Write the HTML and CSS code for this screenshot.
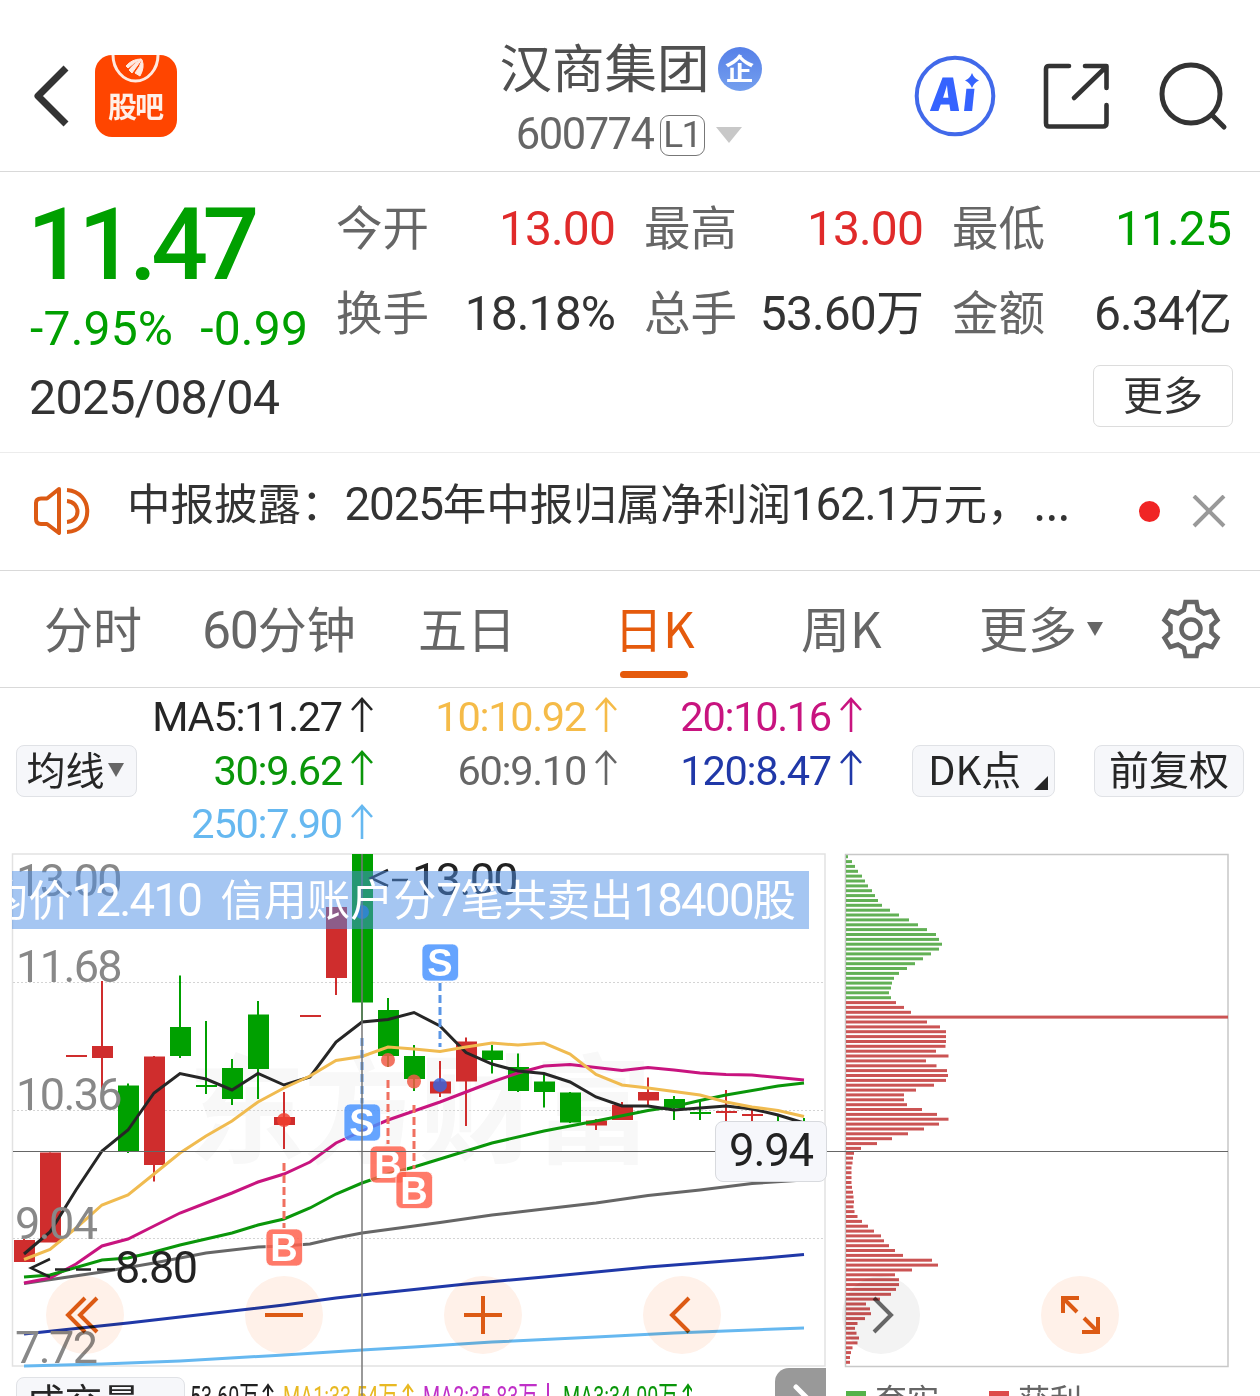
FILE: index.html
```html
<!DOCTYPE html>
<html lang="zh-CN">
<head>
    <meta charset="UTF-8">
    <meta name="viewport" content="width=device-width, initial-scale=1.0">
    <title>汉商集团 600774</title>
    <link rel="stylesheet" href="styles.css">
</head>
<body>
    <div class="header">
        <div class="header-left">
            <svg class="back" width="40" height="64" viewBox="0 0 40 64"><path d="M35 4 L7 32 L35 60" fill="none" stroke="#333" stroke-width="7" stroke-linejoin="round"/></svg>
            <svg class="guba" width="82" height="82" viewBox="0 0 82 82">
                <rect width="82" height="82" rx="17" fill="#ff4500"/>
                <path d="M18 0 A22.5 26 0 0 0 63 0" fill="none" stroke="#ffe9e0" stroke-width="3"/>
                <path d="M31 11 Q37 4 46 4 Q38 8 33 13Z M34 15 Q39 8 47 4 Q42 11 37 18Z M40 18 Q45 12 47 5 Q50 12 45 21Z" fill="#ffe9e0" stroke="#ffe9e0"/>
                <text x="41" y="63" textLength="56" text-anchor="middle" class="guba-text">股吧</text>
            </svg>
        </div>
        <div class="header-title">
            <div class="stock-name">汉商集团<span class="qi">企</span></div>
            <div class="stock-code">600774<span class="level">L1</span><i class="code-arrow"></i></div>
        </div>
        <div class="header-right">
            <svg width="82" height="82" viewBox="0 0 82 82">
                <circle cx="41" cy="41" r="38.3" fill="none" stroke="#4169ea" stroke-width="4"/>
                <g class="ai-text" transform="skewX(-6)">
                    <text x="21" y="56" textLength="31" lengthAdjust="spacingAndGlyphs">A</text>
                    <text x="54" y="56.500" font-size="41">ı</text>
                </g>
                <path d="M58 18 Q60 23.500 65 25.500 Q60 27.500 58 33 Q56 27.500 51 25.500 Q56 23.500 58 18Z" fill="#3563ff"/>
            </svg>
            <svg width="68" height="68" viewBox="0 0 68 68" fill="none" stroke="#333" stroke-width="4.600" stroke-linecap="round" stroke-linejoin="round">
                <path d="M26 4 H6 Q3 4 3 7 V61 Q3 64.500 6 64.500 H60 Q63.500 64.500 63.500 61 V43 M42 4 H63.500 V26 M63 5 L31 36"/>
            </svg>
            <svg width="70" height="70" viewBox="0 0 70 70" fill="none" stroke="#333" stroke-width="5" stroke-linecap="round">
                <circle cx="33" cy="33" r="29"/><path d="M54 54 L66 66"/>
            </svg>
        </div>
    </div>

    <div class="quote">
        <div class="quote-left">
            <div class="price">11.47</div>
            <div class="change"><span>-7.95%</span><span>-0.99</span></div>
            <div class="date">2025/08/04</div>
        </div>
        <div class="quote-right">
            <div class="quote-grid">
                <div class="cell"><label>今开</label><span class="up">13.00</span></div>
                <div class="cell"><label>最高</label><span class="up">13.00</span></div>
                <div class="cell"><label>最低</label><span class="down">11.25</span></div>
                <div class="cell"><label>换手</label><span>18.18%</span></div>
                <div class="cell"><label>总手</label><span>53.60万</span></div>
                <div class="cell"><label>金额</label><span>6.34亿</span></div>
            </div>
            <button class="more-btn">更多</button>
        </div>
    </div>

    <div class="notice">
        <svg width="60" height="52" viewBox="0 0 60 52" fill="none" stroke="#dc5a14" stroke-width="4" stroke-linejoin="round">
            <path d="M27 3 L15 12.500 H9 Q4 12.500 4 17 V33 Q4 38 9 38 H15 L27 47Z"/>
            <path d="M35 4 C62 6 62 45 35 46 M35 15 C49 16 49 35 35 36"/>
        </svg>
        <div class="notice-text">中报披露：<span class="num">2025</span>年中报归属净利润<span class="num">162.1</span>万元，<span class="dots">...</span></div>
        <i class="red-dot"></i>
        <svg width="34" height="34" viewBox="0 0 34 34" stroke="#999" stroke-width="4"><path d="M2 1 L32 31 M32 1 L2 31"/></svg>
    </div>

    <div class="tabs">
        <div class="tab tab-fs">分时</div>
        <div class="tab tab-60"><span class="num">60</span>分钟</div>
        <div class="tab tab-5d">五日</div>
        <div class="tab tab-day active">日K</div>
        <div class="tab tab-week">周K</div>
        <div class="tab tab-more">更多<i class="tri"></i></div>
        <svg class="gear" width="60" height="60" viewBox="0 0 60 60" fill="none" stroke="#666" stroke-width="4.500">
            <path d="M24.500 3 H35.500 L37 11 L43 14.500 L51 12 L56.500 21 L50.500 26.500 V33.500 L56.500 39 L51 48 L43 45.500 L37 49 L35.500 57 H24.500 L23 49 L17 45.500 L9 48 L3.500 39 L9.500 33.500 V26.500 L3.500 21 L9 12 L17 14.500 L23 11Z"/>
            <circle cx="30" cy="30" r="9.500"/>
        </svg>
    </div>

    <div class="ma">
        <button class="chip-btn ma-btn">均线<i class="tri"></i></button>
        <div class="ma-grid">
            <div class="ma-item c5">MA5:11.27<svg class="arrow"><use href="#up"/></svg></div>
            <div class="ma-item c10">10:10.92<svg class="arrow"><use href="#up"/></svg></div>
            <div class="ma-item c20">20:10.16<svg class="arrow"><use href="#up"/></svg></div>
            <div class="ma-item c30">30:9.62<svg class="arrow"><use href="#up"/></svg></div>
            <div class="ma-item c60">60:9.10<svg class="arrow"><use href="#up"/></svg></div>
            <div class="ma-item c120">120:8.47<svg class="arrow"><use href="#up"/></svg></div>
            <div class="ma-item c250">250:7.90<svg class="arrow"><use href="#up"/></svg></div>
        </div>
        <button class="chip-btn dk-btn">DK点<i class="corner"></i></button>
        <button class="chip-btn fq-btn">前复权</button>
    </div>

    <div class="chart">
        <svg id="chart" width="1260" height="512" viewBox="0 854 1260 512"></svg>
        <div class="banner"><span>均价<span class="num">12.410</span>&nbsp; 信用账户分<span class="num">7</span>笔共卖出<span class="num">18400</span>股</span></div>
        <div class="price-tag">9.94</div>
        <div class="controls">
            <button class="round"><svg viewBox="0 0 78 78"><path d="M39 22 L22 39 L39 56 M51 22 L34 39 L51 56"/></svg></button>
            <button class="round"><svg viewBox="0 0 78 78"><path d="M20 39 H58"/></svg></button>
            <button class="round"><svg viewBox="0 0 78 78"><path d="M20 39 H58 M39 20 V58"/></svg></button>
            <button class="round"><svg viewBox="0 0 78 78"><path d="M46 22 L29 39 L46 56"/></svg></button>
            <button class="round gray"><svg viewBox="0 0 78 78"><path d="M32 22 L49 39 L32 56"/></svg></button>
            <button class="round"><svg viewBox="0 0 78 78"><path d="M22 37 V22 H38 M22 22 L36 36 M57 41 V56 H41 M43 42 L57 56"/></svg></button>
        </div>
    </div>

    <div class="volume">
        <button class="chip-btn vol-btn">成交量<i class="tri"></i></button>
        <svg class="vol-text" width="504" height="38" viewBox="188 1374 504 38">
            <text x="190" y="1407" fill="#222" textLength="69" lengthAdjust="spacingAndGlyphs">53.60万</text>
            <text x="283" y="1407" fill="#e8b923" textLength="115" lengthAdjust="spacingAndGlyphs">MA1:33.54万</text>
            <text x="423" y="1407" fill="#c030c8" textLength="115" lengthAdjust="spacingAndGlyphs">MA2:35.83万</text>
            <text x="563" y="1407" fill="#0a960a" textLength="115" lengthAdjust="spacingAndGlyphs">MA3:34.00万</text>
            <g fill="none" stroke-width="2">
                <path stroke="#222" d="M268 1408 V1385 M263 1392 L268 1385 L273 1392"/>
                <path stroke="#e8b923" d="M408 1408 V1385 M403 1392 L408 1385 L413 1392"/>
                <path stroke="#c030c8" d="M548 1408 V1383"/>
                <path stroke="#0a960a" d="M688 1408 V1385 M683 1392 L688 1385 L693 1392"/>
            </g>
        </svg>
        <div class="vol-next"><svg width="51" height="50" viewBox="0 0 51 50"><path d="M21 19 L36 34 L21 49" fill="none" stroke="#fff" stroke-width="5" stroke-linecap="round"/></svg></div>
        <div class="legend"><i class="sq green"></i>套牢<i class="sq red"></i>获利</div>
    </div>

    <svg class="defs">
        <symbol id="up" viewBox="0 0 22 36"><path d="M11 35 V2 M1 13 L11 2 L21 13" fill="none" stroke="currentColor" stroke-width="2.600"/></symbol>
    </svg>
    <script src="script.js"></script>
</body>
</html>
```

FILE: styles.css
```css
:root {
    --text: #333333;
    --muted: #666666;
    --up: #e02a2a;
    --down: #00a000;
    --accent: #e55a0c;
    --line: #d9d9d9;
    --num: Roboto, "Noto Sans CJK SC", sans-serif;
}

* {
    box-sizing: border-box;
}

body {
    margin: 0;
    width: 1260px;
    height: 1396px;
    overflow: hidden;
    background: #ffffff;
    color: var(--text);
    font-family: "Noto Sans CJK SC", sans-serif;
}

svg {
    display: block;
    flex: none;
}

button {
    font-family: inherit;
    color: inherit;
    padding: 0;
}

.defs {
    width: 0;
    height: 0;
}

.num {
    font-family: var(--num);
    font-size: 1.055em;
    letter-spacing: -1.200px;
}

/* header */
.header {
    display: flex;
    justify-content: space-between;
    height: 172px;
    padding: 0 32px 0 31px;
    border-bottom: 1px solid var(--line);
}

.header-left {
    display: flex;
    align-items: center;
    gap: 24px;
    width: 380px;
    padding-top: 20px;
}

.guba-text {
    font-size: 29px;
    font-weight: 700;
    fill: #fff0e8;
}

.header-title {
    width: 290px;
    margin-left: 34px;
    padding-top: 32px;
    white-space: nowrap;
}

.stock-name {
    display: flex;
    align-items: center;
    justify-content: flex-end;
    height: 66px;
    font-size: 52.500px;
    line-height: 66px;
    color: #505050;
    margin-right: 30px;
}

.qi {
    flex: none;
    width: 44px;
    height: 44px;
    margin: 8px 0 0 8px;
    border-radius: 50%;
    background: linear-gradient(#5680e8, #749fee);
    color: #fff;
    font-size: 29px;
    font-weight: 700;
    line-height: 40px;
    text-align: center;
}

.stock-code {
    display: flex;
    align-items: center;
    justify-content: flex-end;
    height: 66px;
    padding-top: 8px;
    font-family: var(--num);
    font-size: 43.500px;
    line-height: 58px;
    letter-spacing: -1.500px;
    color: var(--muted);
    margin-right: 50px;
}

.level {
    width: 45px;
    height: 41px;
    margin: 0 11px 0 6px;
    border: 1.500px solid #777;
    border-radius: 9px;
    font-size: 37px;
    line-height: 38px;
    text-align: center;
}

.code-arrow {
    border: 13px solid transparent;
    border-top: 16px solid #c8c8c8;
    border-bottom: 0;
}

.header-right {
    display: flex;
    align-items: center;
    justify-content: flex-end;
    gap: 47px;
    width: 380px;
    padding-top: 20px;
}

.ai-text {
    font-family: Inter, sans-serif;
    font-weight: 900;
    font-size: 46px;
    fill: #3563ff;
}

/* quote */
.quote {
    display: flex;
    height: 281px;
    padding: 0 28px 0 30px;
    border-bottom: 1px solid #ececec;
}

.quote-left {
    width: 307px;
    padding-top: 23px;
    font-family: var(--num);
}

.price {
    margin-left: -3px;
    font-size: 100px;
    font-weight: 500;
    line-height: 100px;
    letter-spacing: -5.700px;
    color: var(--down);
}

.change {
    display: flex;
    gap: 27px;
    margin-top: -1px;
    font-size: 48px;
    line-height: 70px;
    letter-spacing: 0.200px;
    color: var(--down);
}

.date {
    margin-left: -1px;
    font-size: 48.500px;
    line-height: 68px;
    letter-spacing: -0.800px;
}

.quote-right {
    flex: 1;
    display: flex;
    flex-direction: column;
    align-items: flex-end;
}

.quote-grid {
    display: grid;
    grid-template-columns: repeat(3, 279px);
    column-gap: 29px;
    width: 895px;
    margin-right: 1px;
    padding-top: 11px;
}

.cell {
    display: flex;
    justify-content: space-between;
    height: 84.500px;
    font-size: 46.500px;
    line-height: 84.500px;
}

.cell label {
    color: var(--muted);
}

.cell span {
    padding-top: 4px;
    font-family: var(--num);
    font-size: 48px;
    letter-spacing: -0.900px;
}

.up {
    color: var(--up);
}

.down {
    color: var(--down);
}

.more-btn {
    width: 140px;
    height: 62px;
    margin: 13px -1px 0 0;
    padding-bottom: 6px;
    background: #fff;
    border: 1.500px solid #dcdcdc;
    border-radius: 7px;
    font-size: 40px;
    line-height: 52px;
}

/* notice */
.notice {
    display: flex;
    align-items: center;
    height: 118px;
    padding: 0 34px 0 32px;
    border-bottom: 1px solid var(--line);
}

.notice-text {
    flex: 1;
    padding: 0 0 17px 35px;
    font-size: 43.500px;
    line-height: 60px;
    white-space: nowrap;
}

.dots {
    margin-left: 3px;
}

.red-dot {
    width: 21px;
    height: 21px;
    margin-right: 32px;
    border-radius: 50%;
    background: #f02424;
}

/* period tabs */
.tabs {
    display: flex;
    height: 117px;
    padding-left: 44px;
    border-bottom: 1px solid var(--line);
    font-size: 49px;
    line-height: 112px;
    color: var(--muted);
    white-space: nowrap;
}

.tab {
    position: relative;
}

.tab-fs { width: 158px; }
.tab-60 { width: 216px; }
.tab-5d { width: 196px; }
.tab-day { width: 187px; }
.tab-week { width: 178px; }
.tab-more { width: 182px; height: 112px; display: flex; align-items: center; }

.tab.active {
    color: var(--accent);
}

.tab.active::after {
    content: "";
    position: absolute;
    left: 6px;
    top: 100px;
    width: 68px;
    height: 7px;
    border-radius: 4px;
    background: var(--accent);
}

.tri {
    display: block;
    flex: none;
    border: 8.500px solid transparent;
    border-top: 14px solid var(--muted);
    border-bottom: 0;
}

.tab-more .tri {
    margin: 4px 0 0 10px;
}

.gear {
    margin-top: 28px;
}

/* moving averages */
.ma {
    display: flex;
    align-items: flex-start;
    height: 166px;
    padding: 0 16px;
}

.chip-btn {
    display: flex;
    align-items: center;
    justify-content: center;
    height: 52px;
    padding-bottom: 6px;
    background: #f6f7fa;
    border: 1.500px solid #e0e2e6;
    border-radius: 8px;
    color: #262626;
    font-size: 40px;
    line-height: 44px;
}

.ma-btn {
    width: 121px;
    margin-top: 57px;
    padding-right: 2px;
    font-size: 39px;
}

.ma-btn .tri {
    margin: 4px 0 0 4px;
}

.ma-grid {
    display: grid;
    grid-template-columns: 236px 244px 245px;
    grid-auto-rows: 53.500px;
    width: 776px;
}

.ma-item {
    display: flex;
    justify-content: flex-end;
    align-items: center;
    padding-top: 4px;
    font-family: var(--num);
    font-size: 41.500px;
    line-height: 49px;
    letter-spacing: -1.300px;
}

.arrow {
    width: 22px;
    height: 36px;
    margin: -4px 0 0 9px;
}

.c5 { color: #262626; }
.c10 { color: #f5bb48; }
.c20 { color: #c8147f; }
.c30 { color: #0a960a; }
.c60 { color: #666666; }
.c120 { color: #2038a8; }
.c250 { color: #66b8f0; }

.dk-btn {
    position: relative;
    width: 143px;
    margin-top: 57px;
    padding-right: 18px;
}

.corner {
    position: absolute;
    right: 6px;
    bottom: 6px;
    border-left: 14px solid transparent;
    border-bottom: 14px solid #262626;
}

.fq-btn {
    width: 150px;
    margin: 57px 0 0 39px;
}

/* chart */
.chart {
    position: relative;
    height: 512px;
}

#chart {
    overflow: visible;
}

.axis,
.mark {
    font-family: var(--num);
    font-size: 45px;
    letter-spacing: -1.600px;
    fill: #888;
}

.mark {
    fill: #222;
}

.watermark {
    font-size: 118px;
    font-weight: 700;
    fill: #f8f8f8;
}

.badge {
    font-family: "Liberation Sans", Arial, sans-serif;
    font-size: 38px;
    font-weight: 700;
    fill: #fff;
}

.banner {
    position: absolute;
    left: 12px;
    top: 17px;
    width: 797px;
    height: 58px;
    display: flex;
    justify-content: flex-end;
    overflow: hidden;
    padding-right: 13px;
    background: rgba(75, 142, 230, 0.5);
    color: #fff;
    font-size: 43.200px;
    line-height: 52px;
    white-space: nowrap;
}

.banner .num {
    letter-spacing: -1.700px;
}

.price-tag {
    position: absolute;
    left: 715px;
    top: 267px;
    width: 112px;
    height: 61px;
    border: 1.500px solid #d8dade;
    border-radius: 8px;
    background: #f6f7fb;
    color: #222;
    font-family: var(--num);
    font-size: 45.500px;
    line-height: 58px;
    letter-spacing: -1.200px;
    text-align: center;
}

.controls {
    position: absolute;
    left: 46px;
    top: 422px;
    display: flex;
    gap: 121px;
    mix-blend-mode: multiply;
}

.round {
    width: 78px;
    height: 78px;
    border: 0;
    border-radius: 50%;
    background: #fff1e9;
}

.round svg {
    fill: none;
    stroke: #dc5a14;
    stroke-width: 4;
}

.round.gray {
    background: #f3f3f3;
}

.round.gray svg {
    stroke: var(--muted);
}

/* volume strip */
.volume {
    display: flex;
    align-items: flex-start;
    height: 60px;
    padding-left: 16px;
}

.vol-btn {
    width: 169px;
    margin-top: 11px;
    padding-right: 4px;
    font-size: 38px;
}

.vol-btn .tri {
    margin: 7px 0 0 14px;
}

.vol-text {
    margin: 8px 0 0 3px;
    font-family: var(--num);
    font-size: 29px;
}

.vol-next {
    width: 51px;
    height: 50px;
    margin: 2px 0 0 83px;
    border-radius: 14px 0 0 0;
    background: #999;
}

.legend {
    display: flex;
    align-items: flex-start;
    margin: 9px 0 0 20px;
    font-size: 32px;
    line-height: 46px;
    color: var(--muted);
}

.sq {
    width: 20px;
    height: 20px;
    margin: 16px 9px 0 0;
}

.sq.green {
    background: #55b24a;
}

.sq.red {
    margin-left: 50px;
    background: #dd4b4b;
}
```

FILE: script.js
```javascript
const RED = '#cf2d2d';
const GREEN = '#00a000';
const STEP = 26;
const X0 = 24;

// [color, body top, body bottom, wick top, wick bottom]
const candles = [
    ['r', 1240, 1262, 1239, 1262], ['r', 1152.5, 1242.5, 1152.5, 1242], ['r', 1055, 1057, 1056, 1056],
    ['r', 1046, 1058, 981, 1097], ['g', 1085.5, 1152, 1083.5, 1153], ['r', 1056.5, 1165, 1056, 1181.5],
    ['g', 1027, 1056, 975.5, 1058], ['g', 1085, 1087, 1021, 1094], ['g', 1068, 1099, 1059, 1105],
    ['g', 1014.5, 1069, 1001, 1099], ['r', 1117, 1125, 1092, 1149], ['r', 1015, 1017, 1016, 1016],
    ['r', 907, 978, 907, 995], ['g', 854, 1002.5, 854, 1021], ['g', 1010, 1056, 998, 1067],
    ['g', 1056, 1079, 1045, 1091], ['r', 1081.5, 1093.5, 1061, 1097], ['r', 1041.5, 1081.5, 1037.5, 1126],
    ['g', 1050.5, 1060, 1045, 1073.5], ['g', 1067, 1091, 1053.5, 1092], ['g', 1081.5, 1092, 1074.5, 1107.5],
    ['g', 1092.5, 1122.5, 1092, 1123], ['r', 1120.5, 1125.5, 1119, 1130], ['r', 1105, 1120, 1102, 1120],
    ['r', 1092, 1100.5, 1077.5, 1105.5], ['g', 1099, 1108, 1096, 1120], ['g', 1112, 1114, 1102, 1120],
    ['r', 1111, 1113, 1090, 1122], ['r', 1114, 1116, 1109, 1122], ['g', 1121, 1123, 1115, 1124],
    ['g', 1122, 1124, 1118, 1124]
];

const lines = [
    ['#66b8f0', '24,1366 102,1364 180,1361 284,1355 362,1350 414,1347 492,1342 596,1337 674,1333 804,1328'],
    ['#2038a8', '24,1334 128,1323 180,1317 284,1305 336,1298 362,1295 466,1284 544,1277 648,1267 752,1259 804,1254.5'],
    ['#666666', '24,1283.5 102,1272 154,1263 206,1253 258,1247 284,1246 310,1244 336,1238 362,1233 414,1226 440,1222.5 492,1215 544,1209 596,1203 648,1195.5 700,1190 752,1183.5 804,1180'],
    ['#c8147f', '24,1283 50,1278 76,1264 102,1246 128,1239 154,1226 180,1213 206,1203 232,1193 258,1182 284,1174 310,1162 336,1143 362,1131 388,1120 414,1111 440,1102 466,1092 492,1082 518,1073 544,1066 570,1064.5 596,1067.5 622,1070.5 648,1067.5 674,1070 700,1073 726,1074.5 752,1075 778,1077.5 804,1080'],
    ['#0a960a', '24,1277 50,1275 102,1260 128,1258 154,1252 180,1245 232,1233 258,1225 284,1219 310,1208 336,1194 362,1183 388,1174 414,1167 440,1159 466,1151 492,1143 544,1131 570,1126 596,1121 648,1110.5 674,1106.5 700,1100.5 726,1095 778,1086 804,1083'],
    ['#262626', '24,1254 50,1232 76,1190 102,1151 128,1130 154,1093 180,1073.5 206,1079 232,1090 258,1073.5 284,1085 310,1077 336,1042 362,1022 388,1019.5 414,1012.5 440,1026 466,1052.5 492,1064 518,1071 544,1073.5 570,1082 596,1097 622,1106 648,1106 674,1110 700,1108 726,1106 752,1109 778,1115 804,1123'],
    ['#f0bb50', '24,1259.5 50,1249.5 76,1228 102,1205 128,1195 154,1174 180,1153 206,1136 232,1121 258,1102 284,1088 310,1076 336,1060.5 362,1056.5 388,1047 414,1049 440,1051.5 466,1047 492,1043 518,1045 544,1043 570,1054 596,1074.5 622,1085 648,1088 674,1091.5 700,1095 726,1102 752,1107 778,1110.5 804,1116.5']
];

// chip distribution, bar lengths from top to bottom
const trapped = [2, 6, 9, 12, 16, 19, 22, 26, 29, 32, 36, 44, 53, 63, 72, 81, 90, 93, 96, 93, 85, 77, 69, 61, 53, 48, 46, 45, 43, 45];
const profit = [50, 58, 65, 382, 81, 94, 100, 100, 100, 99.5, 90, 102.5, 80, 90.5, 101, 102, 100, 88, 70, 58, 58, 61, 76, 91, 102.5,
    93, 78, 62, 46, 31, 15, 8, 7, 6.5, 5.5, 5.5, 5.5, 5.5, 6, 7, 7.5, 8, 7.5, 8.5, 11.5, 16, 22, 28, 35, 38, 43, 49, 57, 86, 92, 66, 49,
    53, 53, 50, 45, 34, 20, 24, 25, 19, 11.5, 9, 10.5, 13, 11.5, 6.5, 5, 4, 4];

let out = '';

// frame and grid
out += '<path d="M12.5 1366 V854 H825 V1366 Z" fill="none" stroke="#e2e2e2" stroke-width="1.5"/>';
out += '<text class="watermark" x="188" y="1154" textLength="464">东方财富</text>';
[982.5, 1110.5, 1238.5].forEach(y => {
    out += `<path d="M13 ${y} H825" stroke="#d4d4d4" stroke-dasharray="2 2"/>`;
});

// candles
candles.forEach(([c, top, bottom, high, low], i) => {
    const x = X0 + i * STEP;
    const color = c === 'r' ? RED : GREEN;
    out += `<rect x="${x - 1}" y="${high}" width="2" height="${low - high}" fill="${color}"/>`;
    out += `<rect x="${x - 10}" y="${top}" width="21" height="${bottom - top}" fill="${color}"/>`;
});

lines.forEach(([color, points]) => {
    out += `<polyline points="${points}" fill="none" stroke="${color}" stroke-width="3"/>`;
});

// axis labels
[['13.00', 896], ['11.68', 982], ['10.36', 1110], ['9.04', 1239], ['7.72', 1363]].forEach(([t, y]) => {
    out += `<text class="axis" x="${t.length > 4 ? 16 : 15}" y="${y}">${t}</text>`;
});

// high / low marks
out += '<path d="M388 870 L371 878 L388 886 M392 880 H408" fill="none" stroke="#222" stroke-width="2.5"/>';
out += '<text class="mark" x="412" y="895">13.00</text>';
out += '<path d="M50 1259 L31 1268 L50 1277 M55 1269.500 H70 M76 1269.500 H91 M97 1269.500 H115" fill="none" stroke="#222" stroke-width="2.5"/>';
out += '<text class="mark" x="115" y="1283">8.80</text>';

// trade points
[[284, 1120, '#f04030'], [388, 1060, '#f05a46'], [414, 1081.5, '#f05a46'], [440, 1085, '#3c64d8'], [362, 912, '#1878d0']].forEach(([x, y, c]) => {
    out += `<circle cx="${x}" cy="${y}" r="7" fill="${c}" opacity="0.85"/>`;
});
[[362, 1038, 1104, '#5a96e6'], [440, 983, 1047, '#5a96e6'], [284, 1163, 1228, '#f07060'], [388, 1080, 1144, '#f07060'], [414, 1105, 1169, '#f07060']].forEach(([x, y1, y2, c]) => {
    out += `<path d="M${x} ${y1} V${y2}" stroke="${c}" stroke-width="3" stroke-dasharray="8 4"/>`;
});
[['S', 362, 1122.5], ['S', 440, 962.5], ['B', 284, 1247.5], ['B', 388, 1164.5], ['B', 414, 1190]].forEach(([t, x, y]) => {
    const c = t === 'S' ? '#4893ff' : '#ff604c';
    out += `<rect x="${x - 18}" y="${y - 18.5}" width="36.5" height="37" rx="6" fill="${c}" fill-opacity="0.84" stroke="#fff" stroke-opacity="0.7"/>`;
    out += `<text class="badge" x="${x}" y="${y + 13.5}" text-anchor="middle">${t}</text>`;
});

// chips
out += '<path d="M845.5 854.5 H1228 V1366.5 H845.5 Z" fill="none" stroke="#c8c8c8" stroke-width="1.5"/>';
trapped.concat(profit).forEach((w, i) => {
    const y = 855.2 + i * 4.862;
    out += `<rect x="846" y="${y.toFixed(1)}" width="${w}" height="3" fill="${i < trapped.length ? '#62b055' : '#cb5454'}"/>`;
});

// crosshair
out += '<path d="M362 854 V1396" stroke="#777" stroke-width="1.5"/>';
out += '<path d="M13 1151.5 H1228" stroke="#666" stroke-width="1.2"/>';

document.getElementById('chart').innerHTML = out;
```
